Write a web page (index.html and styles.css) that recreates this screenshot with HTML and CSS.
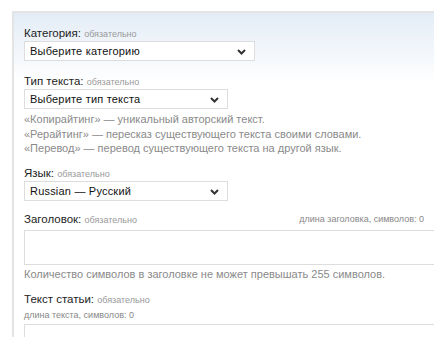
FILE: index.html
```html
<!DOCTYPE html>
<html lang="ru">
<head>
    <meta charset="UTF-8">
    <title>Новый заказ</title>
    <link rel="stylesheet" href="styles.css">
</head>
<body>
    <div class="panel">
        <div class="field">
            <div class="label">Категория: <span class="req">обязательно</span></div>
            <div class="select-wrap wide">
                <select class="select">
                    <option>Выберите категорию</option>
                </select>
                <svg class="chevron" width="9" height="6" viewBox="0 0 9 6"><path d="M1 1 L4.5 4.5 L8 1" fill="none" stroke="#333" stroke-width="2"/></svg>
            </div>
        </div>

        <div class="field">
            <div class="label">Тип текста: <span class="req">обязательно</span></div>
            <div class="select-wrap">
                <select class="select">
                    <option>Выберите тип текста</option>
                </select>
                <svg class="chevron" width="9" height="6" viewBox="0 0 9 6"><path d="M1 1 L4.5 4.5 L8 1" fill="none" stroke="#333" stroke-width="2"/></svg>
            </div>
            <ul class="notes">
                <li>«Копирайтинг» — уникальный авторский текст.</li>
                <li>«Рерайтинг» — пересказ существующего текста своими словами.</li>
                <li>«Перевод» — перевод существующего текста на другой язык.</li>
            </ul>
        </div>

        <div class="field tight">
            <div class="label">Язык: <span class="req">обязательно</span></div>
            <div class="select-wrap">
                <select class="select">
                    <option>Russian — Русский</option>
                </select>
                <svg class="chevron" width="9" height="6" viewBox="0 0 9 6"><path d="M1 1 L4.5 4.5 L8 1" fill="none" stroke="#333" stroke-width="2"/></svg>
            </div>
        </div>

        <div class="field tight">
            <div class="label row">
                <span>Заголовок: <span class="req">обязательно</span></span>
                <span class="counter">длина заголовка, символов: 0</span>
            </div>
            <textarea class="area title-area"></textarea>
            <p class="hint">Количество символов в заголовке не может превышать 255 символов.</p>
        </div>

        <div class="field">
            <div class="label">Текст статьи: <span class="req">обязательно</span></div>
            <div class="counter small">длина текста, символов: 0</div>
            <textarea class="area body-area"></textarea>
        </div>
    </div>
</body>
</html>
```

FILE: styles.css
```css
body {
    margin: 0;
    background: #fff;
    font-family: "Liberation Sans", Arial, sans-serif;
    color: #222;
    overflow: hidden;
}

.panel {
    box-sizing: border-box;
    height: calc(100vh - 11px);
    margin: 11px 0 0 12px;
    padding: 13px 0 0 10px;
    border-top: 2px solid #e4e4e4;
    border-left: 2px solid #e4e4e4;
    background: linear-gradient(#e3ecf6, #fff 70px);
    overflow: hidden;
}

.field {
    margin-bottom: 13px;
}

.field.tight {
    margin-bottom: 11px;
}

.label {
    font-size: 11.5px;
    line-height: 14px;
    color: #222;
}

.req {
    font-size: 9px;
    color: #999;
}

.row {
    display: flex;
    justify-content: space-between;
    padding-right: 10px;
    margin-bottom: 3px;
}

.counter {
    font-size: 9px;
    color: #888;
}

.counter.small {
    line-height: 14px;
    margin-top: 1px;
    margin-bottom: 2px;
}

.select-wrap {
    position: relative;
    width: 204px;
    height: 20px;
}

.select-wrap.wide {
    width: 231px;
}

.select {
    appearance: none;
    -webkit-appearance: none;
    width: 100%;
    height: 20px;
    margin: 0;
    padding: 0 0 0 5px;
    border: 1px solid #ddd;
    background: #fff;
    font-family: "Liberation Sans", Arial, sans-serif;
    font-size: 11px;
    letter-spacing: 0.2px;
    color: #111;
}

.chevron {
    position: absolute;
    right: 9px;
    top: 8px;
}

.notes {
    list-style: none;
    margin: 3px 0 -3px;
    padding: 0;
    font-size: 11px;
    line-height: 14.5px;
    color: #8a8a8a;
}

.area {
    display: block;
    box-sizing: border-box;
    width: 420px;
    margin: 0;
    border: 1px solid #ddd;
    background: #fff;
    resize: none;
}

.title-area {
    height: 35px;
}

.body-area {
    height: 60px;
}

.hint {
    margin: 2px 0 0;
    font-size: 11px;
    line-height: 14px;
    color: #8a8a8a;
}
```
